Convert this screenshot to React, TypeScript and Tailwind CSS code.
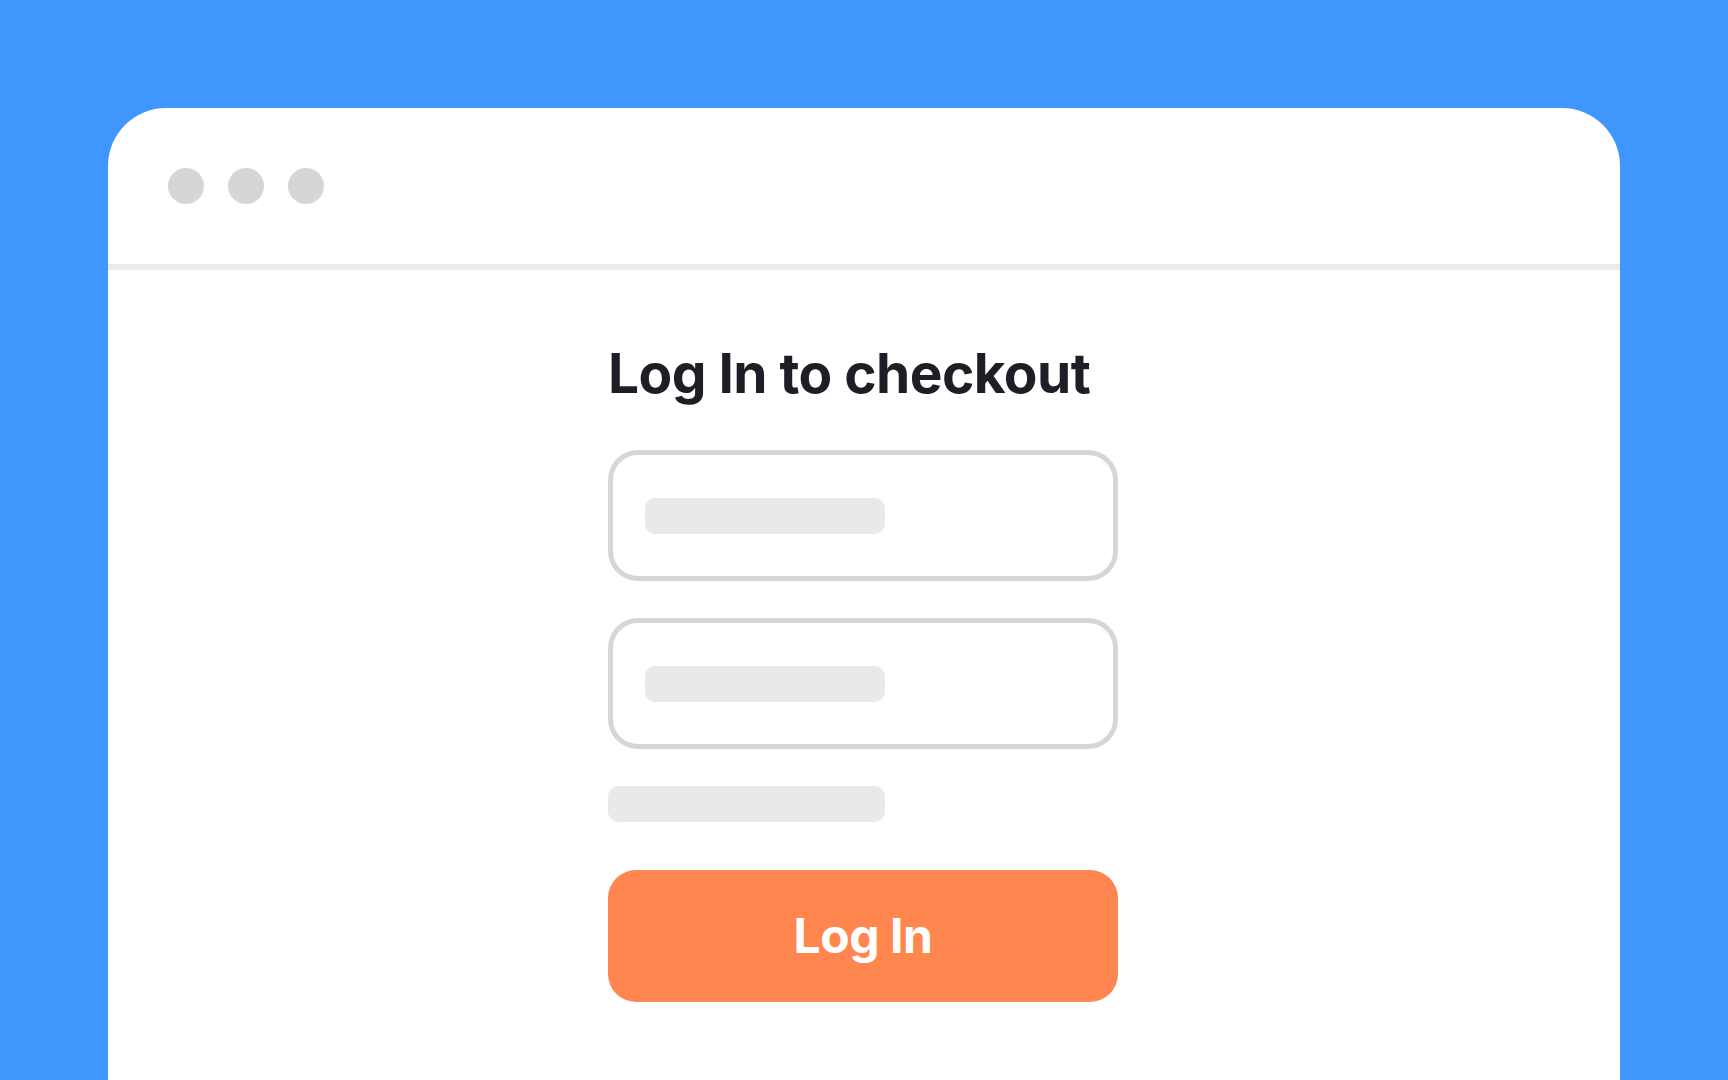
export default function App() {
  return (
    <main className="flex h-[1080px] w-full flex-col overflow-hidden bg-[#4196fe] px-[108px] pt-[108px] font-['Inter',sans-serif]">
      <div className="flex flex-1 flex-col rounded-t-[58px] bg-white">
        {/* window bar */}
        <div className="flex h-[156px] items-center gap-6 pl-[60px]">
          <span className="h-9 w-9 rounded-full bg-[#d6d6d8]" />
          <span className="h-9 w-9 rounded-full bg-[#d6d6d8]" />
          <span className="h-9 w-9 rounded-full bg-[#d6d6d8]" />
        </div>
        <div className="h-[6px] bg-[#ebebeb]" />

        {/* form */}
        <div className="ml-[500px] flex w-[510px] flex-col">
          <h1 className="mt-[76px] text-[55px] leading-[55px] font-bold tracking-[-0.01em] text-[#1e1f26]">
            Log In to checkout
          </h1>

          <div className="mt-[49px] flex h-[131px] items-center rounded-[30px] border-[5px] border-[#d6d6d8] px-[32px]">
            <div className="h-9 w-[240px] rounded-[10px] bg-[#e9e9eb]" />
          </div>

          <div className="mt-[37px] flex h-[131px] items-center rounded-[30px] border-[5px] border-[#d6d6d8] px-[32px]">
            <div className="h-9 w-[240px] rounded-[10px] bg-[#e9e9eb]" />
          </div>

          <div className="mt-[37px] h-9 w-[277px] rounded-[10px] bg-[#e9e9eb]" />

          <button className="mt-[48px] flex h-[132px] items-center justify-center rounded-[28px] bg-[#ff864f] text-[48px] font-bold tracking-[-0.01em] text-white">
            Log In
          </button>
        </div>
      </div>
    </main>
  )
}
